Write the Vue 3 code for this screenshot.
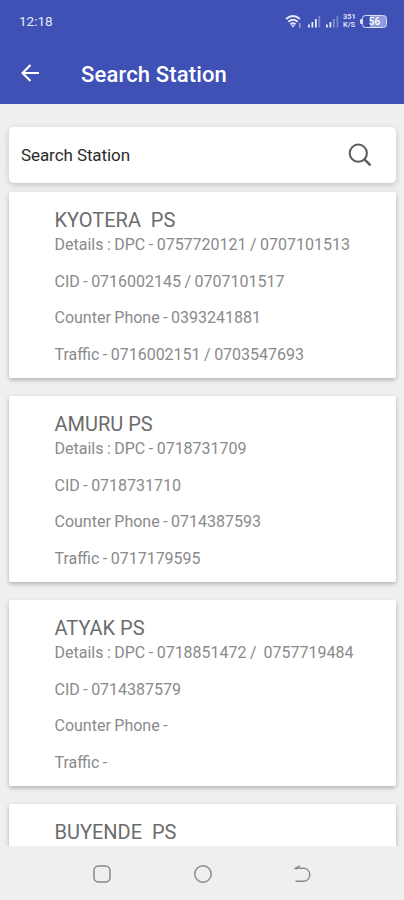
<script setup>
import { ref } from 'vue'

const search = ref('Search Station')

const stations = [
    {
        name: 'KYOTERA  PS',
        lines: ['Details : DPC - 0757720121 / 0707101513', 'CID - 0716002145 / 0707101517', 'Counter Phone - 0393241881', 'Traffic - 0716002151 / 0703547693']
    },
    {
        name: 'AMURU PS',
        lines: ['Details : DPC - 0718731709', 'CID - 0718731710', 'Counter Phone - 0714387593', 'Traffic - 0717179595']
    },
    {
        name: 'ATYAK PS',
        lines: ['Details : DPC - 0718851472 /  0757719484', 'CID - 0714387579', 'Counter Phone -', 'Traffic -']
    },
    {
        name: 'BUYENDE  PS',
        lines: []
    }
]
</script>

<template>
    <div class="screen">
        <header class="header">
            <div class="status">
                <span class="time">12:18</span>
                <div class="indicators">
                    <svg class="wifi" width="17" height="15" viewBox="0 0 17 15" fill="none" stroke="#e6e9fa" stroke-width="1.8">
                        <path d="M1 5Q8 -1 15 5M3.3 7.8Q8 3.8 12.7 7.8M5.5 10.3Q8 8.3 10.5 10.3" />
                        <path d="M6 11.2L8 13.6L10 11.2Z" fill="#e6e9fa" stroke="none" />
                        <path d="M14.8 9V14" stroke-width="1.2" stroke="#aab3e6" />
                    </svg>
                    <svg v-for="n in 2" :key="n" class="signal" width="13" height="13" viewBox="0 0 13 13" fill="#e6e9fa">
                        <rect x="0" y="9.5" width="1.8" height="3" />
                        <rect x="3.5" y="7" width="1.8" height="5.5" />
                        <rect x="7" y="4" width="1.8" height="8.5" :opacity="n === 1 ? 1 : 0.4" />
                        <rect x="10.5" y="1" width="1.7" height="11.5" opacity="0.35" />
                    </svg>
                    <div class="speed"><span>351</span><span>K/S</span></div>
                    <div class="nub"></div>
                    <div class="battery"><span>56</span></div>
                </div>
            </div>
            <div class="toolbar">
                <svg width="20" height="20" viewBox="0 0 20 20" fill="none" stroke="#fff" stroke-width="2.1">
                    <path d="M19 10H2.5M10.5 2L2.5 10L10.5 18" />
                </svg>
                <h1>Search Station</h1>
            </div>
        </header>

        <main class="content">
            <div class="search">
                <input v-model="search" type="text">
                <svg width="24" height="24" viewBox="0 0 24 24" fill="none" stroke="#5a5a5a" stroke-width="2">
                    <circle cx="10.3" cy="10.2" r="8.6" />
                    <path d="M16.2 16.2L22.5 22.3" stroke-width="2.4" />
                </svg>
            </div>
            <div v-for="station in stations" :key="station.name" class="card">
                <h2>{{ station.name }}</h2>
                <p v-for="line in station.lines" :key="line">{{ line }}</p>
            </div>
        </main>

        <nav class="navbar">
            <svg width="20" height="20" viewBox="0 0 20 20">
                <rect x="2" y="2" width="16" height="16" rx="4.5" />
            </svg>
            <svg width="20" height="20" viewBox="0 0 20 20">
                <circle cx="10" cy="10" r="8.2" />
            </svg>
            <svg width="20" height="20" viewBox="0 0 20 20">
                <path d="M2.5 4.2H11A6.6 6.6 0 0 1 11 17.3H2.5" />
                <path d="M6.8 1.8L2.4 4.3L4 5" />
            </svg>
        </nav>
    </div>
</template>

<style>
body {
    margin: 0;
}
</style>

<style scoped>
.screen {
    display: flex;
    flex-direction: column;
    height: 900px;
    overflow: hidden;
    background-color: #efefef;
    font-family: Roboto, "Liberation Sans", sans-serif;
}

.header {
    flex: none;
    height: 104px;
    background-color: #3f51b5;
    color: white;
}

.status {
    display: flex;
    justify-content: space-between;
    align-items: center;
    height: 42px;
    padding: 0 17px 0 19px;
}

.time {
    font-size: 13.5px;
    color: #e6e9fa;
}

.indicators {
    display: flex;
    align-items: center;
}

.wifi {
    margin-right: 6px;
}

.signal {
    margin-right: 4.5px;
}

.speed {
    display: flex;
    flex-direction: column;
    width: 13px;
    margin-right: 4px;
    font-size: 7.5px;
    font-weight: 700;
    line-height: 8px;
    color: #d9def6;
}

.nub {
    width: 2px;
    height: 5px;
    border-radius: 1px 0 0 1px;
    background-color: #d9def6;
}

.battery {
    box-sizing: border-box;
    width: 25px;
    height: 13px;
    border: 1.5px solid #d9def6;
    border-radius: 3.5px;
    background: linear-gradient(to right, #3f51b5 30%, #8f9bdb 30%);
    font-size: 10px;
    font-weight: 500;
    line-height: 12px;
    text-align: center;
}

.toolbar {
    display: flex;
    align-items: center;
    height: 62px;
    padding-left: 20px;
}

h1 {
    margin: 2px 0 0 41px;
    font-size: 22px;
    font-weight: 500;
    letter-spacing: 0.15px;
}

.content {
    flex: none;
    box-sizing: border-box;
    height: 742px;
    padding: 23px 8px 0 9px;
    overflow: hidden;
}

.search {
    display: flex;
    align-items: center;
    justify-content: space-between;
    box-sizing: border-box;
    height: 56px;
    margin-bottom: 9px;
    padding: 0 24px 0 12px;
    border-radius: 5px;
    background-color: white;
    box-shadow: 0 2px 6px rgba(0, 0, 0, 0.18);
}

.search input {
    width: 250px;
    padding: 0;
    border: none;
    outline: none;
    font-family: inherit;
    font-size: 17px;
    letter-spacing: -0.08px;
    color: #2a2a2a;
}

.card {
    box-sizing: border-box;
    height: 186px;
    margin-bottom: 18px;
    padding: 16px 0 0 45.5px;
    border-radius: 2px;
    background-color: white;
    box-shadow: 0 2px 4px rgba(0, 0, 0, 0.25);
    white-space: pre;
}

h2 {
    margin: 0;
    font-size: 20px;
    font-weight: 400;
    line-height: 24px;
    color: #6c6c6c;
}

p {
    margin: 0 0 18.7px;
    font-size: 16px;
    line-height: 18px;
    word-spacing: -0.5px;
    color: #8a8a8a;
}

h2 + p {
    margin-top: 4px;
}

.navbar {
    display: flex;
    justify-content: space-between;
    align-items: center;
    flex: 1;
    padding: 1px 91px 0 92px;
}

.navbar svg {
    fill: none;
    stroke: #8a8a8a;
    stroke-width: 1.5;
}
</style>
